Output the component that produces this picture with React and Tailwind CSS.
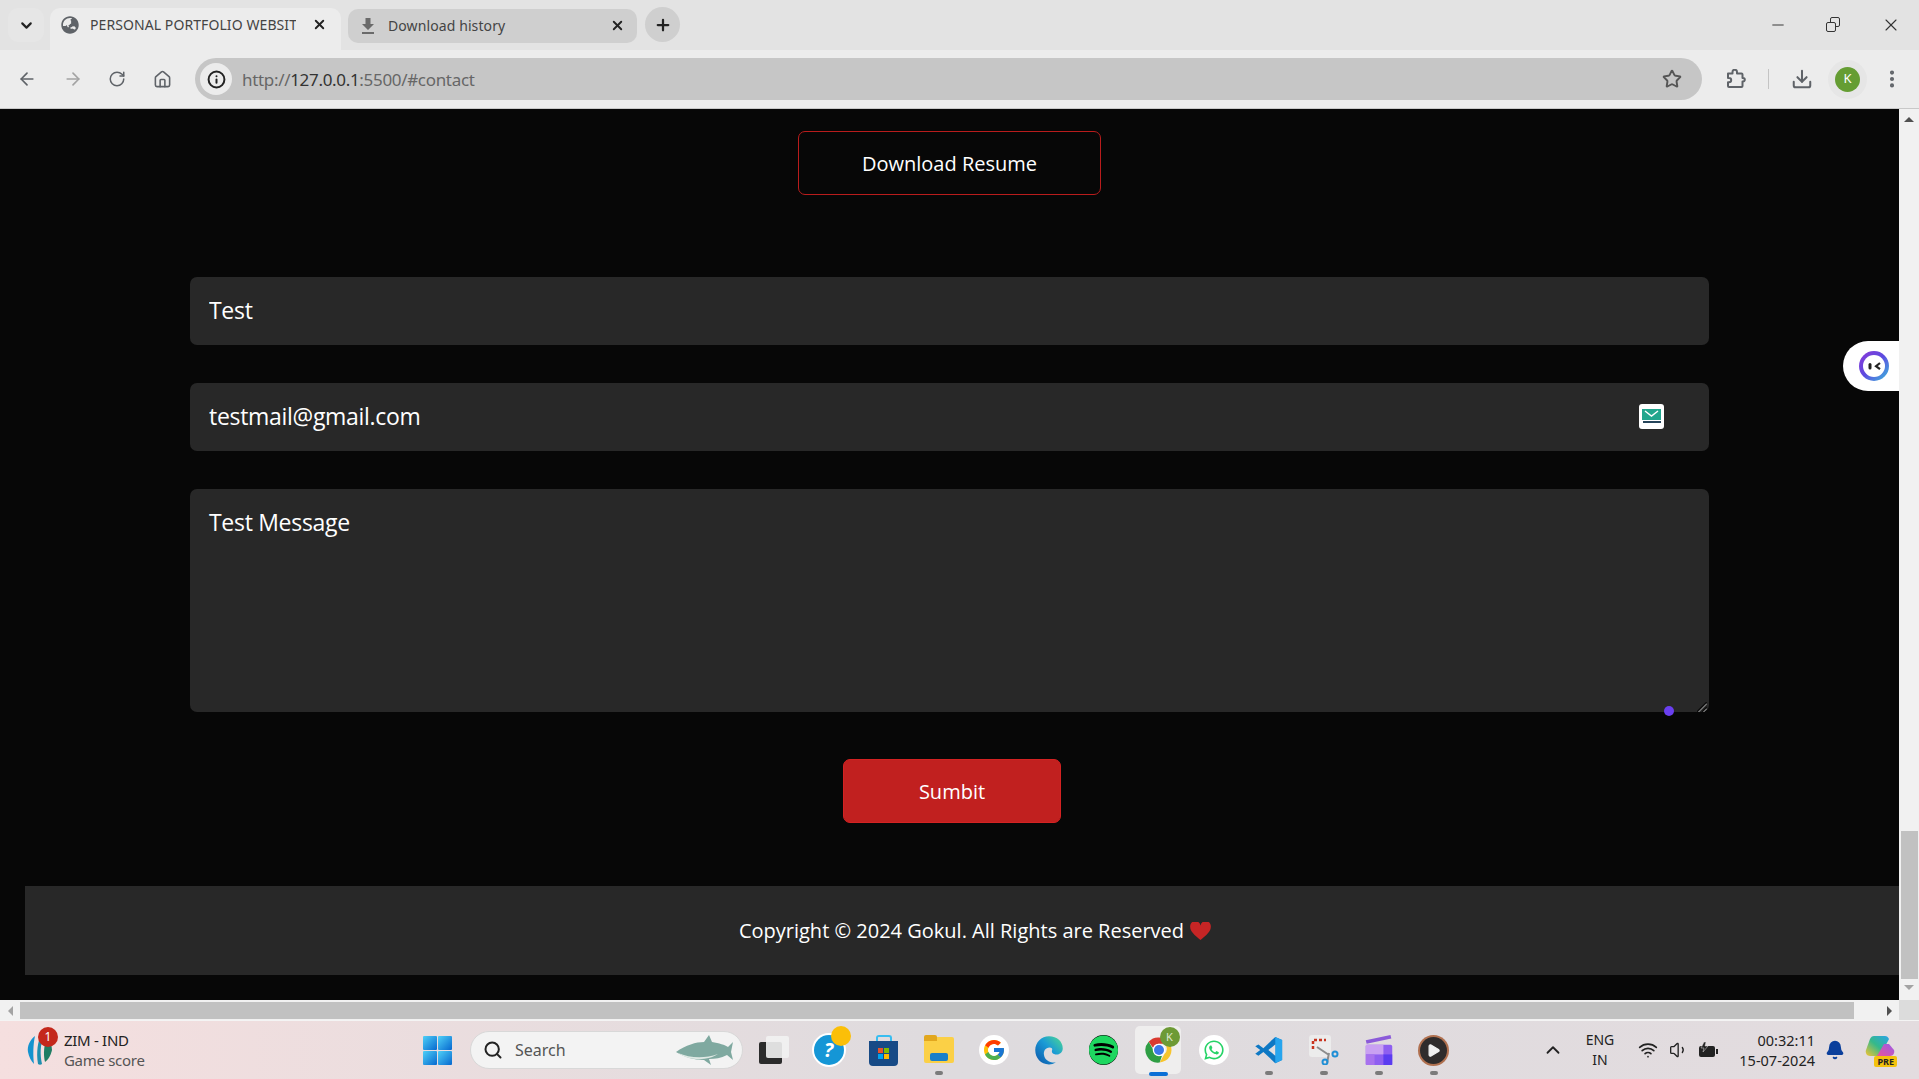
import React from "react";
import {
  ArrowLeft,
  ArrowRight,
  RotateCw,
  Home,
  Info,
  Star,
  Download,
  EllipsisVertical,
  Minus,
  X,
  Plus,
  ChevronDown,
  ChevronUp,
  Search,
  Wifi,
  Volume1,
  Bell,
  Play,
} from "lucide-react";
import { FcGoogle } from "react-icons/fc";
import { FaWhatsapp, FaSpotify, FaGlobeAsia } from "react-icons/fa";

const uiFont = { fontFamily: '"Noto Sans", "Open Sans", sans-serif' };

/* ---- small drawings ---- */

function WindowsLogo() {
  return (
    <svg width="29" height="29" viewBox="0 0 29 29">
      <defs>
        <linearGradient id="win" x1="0" y1="0" x2="1" y2="1">
          <stop offset="0" stopColor="#4fd0f7" />
          <stop offset="1" stopColor="#0668cf" />
        </linearGradient>
      </defs>
      <rect x="0" y="0" width="14" height="14" rx="1" fill="url(#win)" />
      <rect x="15" y="0" width="14" height="14" rx="1" fill="url(#win)" />
      <rect x="0" y="15" width="14" height="14" rx="1" fill="url(#win)" />
      <rect x="15" y="15" width="14" height="14" rx="1" fill="url(#win)" />
    </svg>
  );
}

function CricketLogo() {
  return (
    <svg width="26" height="30" viewBox="0 0 26 30">
      <path d="M8 1C3 5 0 11 1 17c1 5 3 9 6 12-1-8-1-19 1-28z" fill="#1593cf" />
      <path d="M14 0c-3 6-5 17-3 29 1 1 3 1 4 0-2-9-2-20 2-28z" fill="#1d8fb0" />
      <path d="M20 3c-3 7-4 16-2 24 3-2 6-7 7-12 0-4-2-9-5-12z" fill="#1f7d63" />
    </svg>
  );
}

function ChromeLogo() {
  return (
    <svg width="30" height="30" viewBox="0 0 48 48">
      <path d="M24 4a20 20 0 0 1 17.3 10H24a10 10 0 0 0-9.4 6.6L7.5 10.8A20 20 0 0 1 24 4z" fill="#d93a2f" />
      <path d="M41.3 14A20 20 0 0 1 25 44l8-14a10 10 0 0 0-1-16h9.3z" fill="#f7c52d" />
      <path d="M7.5 10.8l8.7 15a10 10 0 0 0 12.6 7.2L25 44A20 20 0 0 1 7.5 10.8z" fill="#2f9e44" />
      <circle cx="24" cy="24" r="10" fill="#fff" />
      <circle cx="24" cy="24" r="8" fill="#3b78e7" />
    </svg>
  );
}

function EdgeLogo() {
  return (
    <svg width="30" height="30" viewBox="0 0 48 48">
      <defs>
        <linearGradient id="edge" x1="0" y1="1" x2="1" y2="0">
          <stop offset="0" stopColor="#0b53a8" />
          <stop offset="0.55" stopColor="#1a9ad6" />
          <stop offset="1" stopColor="#4fdc8f" />
        </linearGradient>
      </defs>
      <path d="M24 2c13 0 22 9 22 19 0 7-6 11-12 10-5-1-6-4-5-7 1-2-1-4-4-4-7 0-10 6-9 12 1 7 8 13 19 12-4 2-7 3-11 3C11 47 2 37 2 24 2 12 12 2 24 2z" fill="url(#edge)" />
    </svg>
  );
}

function VsCodeLogo() {
  return (
    <svg width="30" height="30" viewBox="0 0 48 48">
      <path d="M34 3l11 5v32l-11 5L15 27l-8 6-5-3 8-6-8-6 5-3 8 6L34 3z" fill="#0e78c4" />
      <path d="M34 3l11 5v32l-11 5V3z" fill="#27a5ee" />
      <path d="M34 15v18l-11-9 11-9z" fill="#e3dfe1" />
    </svg>
  );
}

function SnipLogo() {
  return (
    <svg width="30" height="30" viewBox="0 0 30 30">
      <rect x="0" y="0" width="22" height="22" rx="3" fill="#ececec" />
      <path d="M4 14V5h13" fill="none" stroke="#c8341f" strokeWidth="2.5" strokeDasharray="3 2" />
      <path d="M8 12l12 8M18 28l2-10" stroke="#8d8d8d" strokeWidth="2" />
      <circle cx="26" cy="19" r="2.5" fill="none" stroke="#1f8fd6" strokeWidth="2" />
      <circle cx="16" cy="27" r="2.5" fill="none" stroke="#1f8fd6" strokeWidth="2" />
    </svg>
  );
}

function ClapperLogo() {
  return (
    <svg width="30" height="30" viewBox="0 0 30 34">
      <path d="M0 6l28-6 1 4L1 10z" fill="#8b5ad9" />
      <rect x="0" y="11" width="30" height="23" rx="2" fill="#8f5ff0" />
      <rect x="0" y="11" width="20" height="11" fill="#c9a0f2" />
      <rect x="0" y="22" width="10" height="12" fill="#a872ee" />
      <rect x="20" y="22" width="10" height="12" fill="#5b3cf0" />
    </svg>
  );
}

function PlayerLogo() {
  return (
    <div className="flex h-[27px] w-[27px] items-center justify-center rounded-full bg-[#2f2c2c] ring-[2px] ring-[#b0704f]">
      <Play size={15} fill="#f0f0f0" stroke="#f0f0f0" />
    </div>
  );
}

function CopilotLogo() {
  return (
    <div className="relative h-[30px] w-[30px]">
      <svg width="30" height="24" viewBox="0 0 30 24">
        <defs>
          <linearGradient id="copl" x1="0" y1="1" x2="1" y2="0">
            <stop offset="0" stopColor="#f5c431" />
            <stop offset="0.5" stopColor="#35b98a" />
            <stop offset="1" stopColor="#2aa3e8" />
          </linearGradient>
          <linearGradient id="copr" x1="0" y1="1" x2="1" y2="0">
            <stop offset="0" stopColor="#e8559a" />
            <stop offset="1" stopColor="#9a5ae8" />
          </linearGradient>
        </defs>
        <path d="M9 1h11c2 0 3 1 4 3l-9 17H5c-3 0-5-3-4-6L5 4c1-2 2-3 4-3z" fill="url(#copl)" />
        <path d="M19 9h5l5 6c1 3-1 6-4 6H12z" fill="url(#copr)" />
      </svg>
      <span className="absolute bottom-[-2px] right-[-2px] rounded-[2px] bg-[#f4c20d] px-[3px] text-[9px] font-bold leading-[11px] text-[#222]">
        PRE
      </span>
    </div>
  );
}

function TempMailIcon() {
  return (
    <div className="flex h-[25px] w-[25px] flex-col items-center rounded-[3px] bg-white pt-[5px]">
      <svg width="19" height="11" viewBox="0 0 19 11">
        <rect width="19" height="11" fill="#21a68d" />
        <path d="M3 2l6.5 5L16 2" stroke="#fff" strokeWidth="1.4" fill="none" />
      </svg>
      <div className="mt-[1px] h-[2px] w-[18px] bg-[#25445a]" />
    </div>
  );
}

function ExtensionIcon() {
  return (
    <svg width="20" height="20" viewBox="0 0 20 20" className="ml-[24px]">
      <path
        d="M2 4.5h4.5V3a2 2 0 0 1 4.500 0v1.500h4.500a1 1 0 0 1 1 1v3.500h.5a1.800 1.800 0 0 1 0 3.600h-.5v4.400a1 1 0 0 1-1 1H3a1 1 0 0 1-1-1v-3.700h1a2.200 2.200 0 0 0 0-4.400H2z"
        fill="none"
        stroke="currentColor"
        strokeWidth="2"
        strokeLinejoin="round"
      />
    </svg>
  );
}

function TabDownloadIcon() {
  return (
    <svg width="14" height="16" viewBox="0 0 14 16" className="ml-[2px]">
      <path d="M4.5 0h5v6H13L7 12 1 6h3.500z" fill="#6a6a6a" />
      <rect x="1" y="14" width="12" height="2" fill="#6a6a6a" />
    </svg>
  );
}

function AssistantIcon() {
  return (
    <div className="flex h-[30px] w-[30px] items-center justify-center rounded-full bg-gradient-to-br from-[#8a35d8] via-[#5a4ae0] to-[#25b8d8]">
      <svg width="22" height="22" viewBox="0 0 22 22">
        <circle cx="11" cy="11" r="11" fill="#fff" />
        <rect x="5.5" y="8" width="3" height="6.5" rx="1.5" fill="#222" />
        <path d="M17 8l-4 3.200 4 3" fill="none" stroke="#222" strokeWidth="2.2" />
      </svg>
    </div>
  );
}

function ResizeGrip() {
  return (
    <svg width="10" height="10" viewBox="0 0 10 10" className="absolute bottom-0 right-[2px]">
      <path d="M0 10L10 0M5 10l5-5" stroke="#0d0d0d" strokeWidth="1.6" />
      <path d="M1.5 10L10 1.500M6.500 10L10 6.500" stroke="#b5b5b5" strokeWidth="1" />
    </svg>
  );
}

/* ---- browser chrome ---- */

function TabBar() {
  return (
    <div className="flex h-[50px] items-start bg-[#e3e3e3] text-[#3c3c3c]" style={uiFont}>
      <div className="ml-[8px] mt-[8px] flex h-[34px] w-[36px] items-center justify-center rounded-[10px] bg-[#e6e6e6]">
        <ChevronDown size={17} strokeWidth={3} className="text-[#222]" />
      </div>
      {/* active tab */}
      <div className="ml-[6px] mt-[8px] flex h-[42px] w-[291px] items-center rounded-t-[10px] bg-[#ececec] pb-[9px] pl-[11px]">
        <FaGlobeAsia size={18} className="text-[#5f6368]" />
        <span className="ml-[11px] w-[206px] overflow-hidden whitespace-nowrap text-[14px] tracking-[0.08px] text-[#444]">
          PERSONAL PORTFOLIO WEBSIT
        </span>
        <X size={15} strokeWidth={3} className="ml-[16px] text-[#222]" />
      </div>
      {/* other tab */}
      <div className="ml-[7px] mt-[9px] flex h-[34px] w-[289px] items-center rounded-[10px] bg-[#cfcfcf] pb-[1px] pl-[11px]">
        <TabDownloadIcon />
        <span className="ml-[13px] w-[222px] whitespace-nowrap text-[14px] tracking-[0.1px] text-[#444]">
          Download history
        </span>
        <X size={15} strokeWidth={3} className="text-[#222]" />
      </div>
      <div className="ml-[8px] mt-[7px] flex h-[35px] w-[35px] items-center justify-center rounded-full bg-[#cfcfcf]">
        <Plus size={18} strokeWidth={3} className="text-[#222]" />
      </div>
      <div className="ml-auto mt-[15px] flex items-center text-[#333]">
        <Minus size={18} strokeWidth={1.3} />
        <div className="relative ml-[39px] h-[13px] w-[13px]">
          <div className="absolute right-[-1px] top-[-2px] h-[10px] w-[10px] rounded-[2px] border border-[#333]" />
          <div className="absolute bottom-0 left-0 h-[10px] w-[10px] rounded-[2px] border border-[#333] bg-[#e3e3e3]" />
        </div>
        <X size={20} strokeWidth={1.3} className="ml-[42px] mr-[18px]" />
      </div>
    </div>
  );
}

function Toolbar() {
  return (
    <div className="flex h-[59px] items-start border-b border-[#c8c8c8] bg-[#ececec] pt-[8px]" style={uiFont}>
      <div className="flex h-[42px] items-center pl-[17px] text-[#5f6368]">
        <ArrowLeft size={20} strokeWidth={2} />
        <ArrowRight size={20} strokeWidth={2} className="ml-[26px] text-[#a3a3a3]" />
        <RotateCw size={18} strokeWidth={2} className="ml-[25px]" />
        <Home size={19} strokeWidth={2} className="ml-[27px]" />
      </div>
      <div className="ml-[23px] flex h-[42px] w-[1507px] items-center rounded-full bg-[#c6c6c6] pl-[5px] pr-[20px]">
        <div className="flex h-[32px] w-[32px] items-center justify-center rounded-full bg-[#ececec]">
          <Info size={19} strokeWidth={2.5} className="text-[#222]" />
        </div>
        <span className="ml-[10px] whitespace-nowrap pt-[1px] text-[17px] tracking-[-0.32px] text-[#666]">
          http://<span className="text-[#333]">127.0.0.1</span>:5500/#contact
        </span>
        <Star size={20} strokeWidth={2.3} className="ml-auto text-[#555]" />
      </div>
      <div className="flex h-[42px] items-center text-[#5f6368]">
        <ExtensionIcon />
        <div className="ml-[22px] h-[20px] w-[1px] bg-[#c4c4c4]" />
        <Download size={22} strokeWidth={2.2} className="ml-[22px]" />
        <div className="ml-[22px] flex h-[25px] w-[25px] items-center justify-center rounded-full bg-[#659d33] text-[13px] text-white ring-[7px] ring-[#e6e6e6]">
          K
        </div>
        <EllipsisVertical size={22} strokeWidth={2.5} className="ml-[21px]" />
      </div>
    </div>
  );
}

/* ---- the page itself ---- */

function ContactPage() {
  const fieldClass =
    "h-[68px] w-full rounded-[7px] bg-[#282828] px-[19px] pb-[2px] text-[23px] tracking-[-0.3px] text-white outline-none";

  return (
    <div className="relative h-[891px] w-[1899px] overflow-hidden bg-[#070707] text-white" style={{ fontFamily: '"Open Sans", sans-serif' }}>
      <div className="flex justify-center pt-[22px]">
        <button className="h-[64px] w-[303px] rounded-[7px] border border-[#b91c1c] pt-[1px] text-[20px]">
          Download Resume
        </button>
      </div>

      <form className="mt-[82px] flex flex-col gap-[38px] px-[190px]">
        <input className={fieldClass} readOnly value="Test" />
        <div className="relative">
          <input className={fieldClass} readOnly value="testmail@gmail.com" />
          <div className="absolute right-[45px] top-[21px]">
            <TempMailIcon />
          </div>
        </div>
        <div className="relative h-[223px]">
          <textarea
            className="block h-[223px] w-full resize-none rounded-[7px] bg-[#282828] px-[19px] py-[16px] text-[23px] tracking-[-0.3px] text-white outline-none"
            readOnly
            defaultValue="Test Message"
          />
          <ResizeGrip />
          <div className="absolute bottom-[-4px] right-[35px] h-[10px] w-[10px] rounded-full bg-[#6a3ff0]" />
        </div>
      </form>

      <div className="mt-[47px] flex justify-center pl-[5px]">
        <button className="h-[64px] w-[218px] rounded-[7px] border border-[#d42222] bg-[#c1201f] pt-[1px] text-[20px]">
          Sumbit
        </button>
      </div>

      <footer className="ml-[25px] mt-[63px] flex h-[89px] items-center justify-center bg-[#282828] pl-[26px] text-[20px]">
        Copyright © 2024 Gokul. All Rights are Reserved
        <svg width="21" height="18" viewBox="0 0 24 21" className="ml-[6px]">
          <path d="M12 21C5 15 0 11 0 6a6 6 0 0 1 12-2 6 6 0 0 1 12 2c0 5-5 9-12 15z" fill="#c62525" />
        </svg>
      </footer>

      {/* floating assistant button */}
      <div className="absolute right-0 top-[232px] flex h-[50px] w-[56px] items-center rounded-l-full bg-white pl-[16px]">
        <AssistantIcon />
      </div>
    </div>
  );
}

function VerticalScrollbar() {
  return (
    <div className="flex h-[891px] w-[20px] flex-col items-center bg-[#f1f1f1]">
      <div className="mt-[8px] h-0 w-0 border-x-[5px] border-b-[5px] border-x-transparent border-b-[#505050]" />
      <div className="mt-[709px] h-[148px] w-[17px] bg-[#c1c1c1]" />
      <div className="mt-[6px] h-0 w-0 border-x-[5px] border-t-[5px] border-x-transparent border-t-[#a3a3a3]" />
    </div>
  );
}

function HorizontalScrollbar() {
  return (
    <div className="flex h-[20px] bg-[#f1f1f1]">
      <div className="flex h-[20px] w-[20px] items-center justify-center pt-[2px]">
        <div className="h-0 w-0 border-y-[5px] border-r-[5px] border-y-transparent border-r-[#a3a3a3]" />
      </div>
      <div className="mt-[2px] h-[17px] w-[1834px] bg-[#c1c1c1]" />
      <div className="flex h-[20px] w-[45px] items-center justify-end pr-[7px] pt-[2px]">
        <div className="h-0 w-0 border-y-[5px] border-l-[5px] border-y-transparent border-l-[#505050]" />
      </div>
      <div className="h-[20px] w-[20px] bg-[#dcdcdc]" />
    </div>
  );
}

/* ---- windows taskbar ---- */

function AppSlot({ children, dot, active }) {
  return (
    <div className="relative flex h-[58px] w-[55px] items-center justify-center">
      {active && <div className="absolute left-[4px] top-[5px] h-[48px] w-[46px] rounded-[5px] bg-[#efeeee]" />}
      <div className="relative flex items-center justify-center">{children}</div>
      {dot && <div className="absolute bottom-[4px] h-[4px] w-[8px] rounded-full bg-[#7b7b7b]" />}
      {active && <div className="absolute bottom-[3px] h-[4px] w-[19px] rounded-full bg-[#0a6fd6]" />}
    </div>
  );
}

function Taskbar() {
  return (
    <div
      className="flex h-[59px] items-center border-t border-[#f4f4f4] bg-gradient-to-r from-[#f5dfdf] via-[#dedbde] to-[#e3dcdf] text-[#222]"
      style={uiFont}
    >
      {/* news widget */}
      <div className="relative ml-[27px] h-[30px] w-[26px]">
        <CricketLogo />
        <span className="absolute right-[-5px] top-[-8px] flex h-[20px] w-[20px] items-center justify-center rounded-full bg-[#c4281c] text-[12px] text-white">
          1
        </span>
      </div>
      <div className="ml-[11px] w-[78px] pb-[1px] text-[15px] leading-[20px] tracking-[-0.3px]">
        <div className="whitespace-nowrap">ZIM - IND</div>
        <div className="whitespace-nowrap text-[#555]">Game score</div>
      </div>

      <div className="ml-[281px] flex">
        <WindowsLogo />
      </div>

      <div className="ml-[18px] flex h-[38px] w-[273px] items-center rounded-full border border-[#d8d8d8] bg-[#f3f3f3] pl-[12px] pr-[8px]">
        <Search size={20} strokeWidth={2.4} className="text-[#222]" />
        <span className="ml-[12px] text-[16px] text-[#555]">Search</span>
        <svg width="60" height="34" viewBox="0 0 60 34" className="ml-auto">
          <path d="M2 19c10-7 20-10 28-10l5-7 3 7c7 1 13 3 16 5l5-5-2 10 2 8-6-5c-6 3-12 4-18 4l2 6-7-5c-10 0-20-3-28-8z" fill="#7fa9a0" />
          <path d="M4 20c12 5 26 6 40 1-8 6-28 8-40-1z" fill="#dfe9e4" />
        </svg>
      </div>

      <div className="ml-[3px] flex">
        <AppSlot>
          <div className="relative h-[28px] w-[30px]">
            <div className="absolute bottom-0 left-0 h-[22px] w-[23px] rounded-[2px] bg-[#2b2b2b]" />
            <div className="absolute right-0 top-0 h-[22px] w-[23px] rounded-[2px] bg-[#f2f2f2]/90" />
          </div>
        </AppSlot>
        <AppSlot>
          <div className="relative flex h-[30px] w-[30px] items-center justify-center rounded-full bg-[#1596d6] ring-2 ring-white">
            <span className="text-[20px] font-bold italic leading-none text-white">?</span>
            <span className="absolute right-[-7px] top-[-9px] h-[20px] w-[20px] rounded-full bg-[#fbbf08]" />
          </div>
        </AppSlot>
        <AppSlot>
          <div className="relative mt-[6px] flex h-[25px] w-[29px] items-center justify-center rounded-b-[4px] bg-[#174a86]">
            <div className="absolute top-[-6px] h-[6px] w-[16px] rounded-t-[3px] border-2 border-b-0 border-[#38bdf0]" />
            <div className="grid grid-cols-2 gap-[1px]">
              <span className="h-[5px] w-[5px] bg-[#e8532b]" />
              <span className="h-[5px] w-[5px] bg-[#7fba00]" />
              <span className="h-[5px] w-[5px] bg-[#00a4ef]" />
              <span className="h-[5px] w-[5px] bg-[#ffb900]" />
            </div>
          </div>
        </AppSlot>
        <AppSlot dot>
          <div className="relative h-[26px] w-[30px] rounded-[2px] bg-[#fbd046]">
            <div className="absolute left-0 top-[-2px] h-[6px] w-[13px] rounded-t-[2px] bg-[#e2a71e]" />
            <div className="absolute bottom-[2px] left-[6px] h-[8px] w-[18px] rounded-[2px] bg-[#1a7fc8]" />
          </div>
        </AppSlot>
        <AppSlot>
          <div className="flex h-[30px] w-[30px] items-center justify-center rounded-full bg-white">
            <FcGoogle size={24} />
          </div>
        </AppSlot>
        <AppSlot>
          <EdgeLogo />
        </AppSlot>
        <AppSlot>
          <div className="flex h-[30px] w-[29px] items-center justify-center rounded-full bg-black">
            <FaSpotify size={30} className="text-[#1ed760]" />
          </div>
        </AppSlot>
        <AppSlot active>
          <ChromeLogo />
          <span className="absolute right-[-6px] top-[-8px] flex h-[20px] w-[20px] items-center justify-center rounded-full bg-[#6d9a35] text-[11px] text-[#dfe8cf]">
            K
          </span>
        </AppSlot>
        <AppSlot>
          <div className="flex h-[30px] w-[30px] items-center justify-center rounded-full bg-white">
            <FaWhatsapp size={22} className="text-[#25d366]" />
          </div>
        </AppSlot>
        <AppSlot dot>
          <VsCodeLogo />
        </AppSlot>
        <AppSlot dot>
          <SnipLogo />
        </AppSlot>
        <AppSlot dot>
          <ClapperLogo />
        </AppSlot>
        <AppSlot dot>
          <PlayerLogo />
        </AppSlot>
      </div>

      {/* tray */}
      <ChevronUp size={22} strokeWidth={2} className="ml-[81px] text-[#222]" />
      <div className="ml-[11px] w-[50px] text-center text-[14px] leading-[20px]">
        <div>ENG</div>
        <div>IN</div>
      </div>
      <Wifi size={20} strokeWidth={2} className="ml-[13px]" />
      <Volume1 size={20} strokeWidth={1.6} className="ml-[11px]" />
      <svg width="20" height="16" viewBox="0 0 20 16" className="ml-[9px]">
        <rect x="1" y="4" width="16" height="11" rx="2" fill="#222" />
        <rect x="18" y="7" width="2" height="5" fill="#222" />
        <path d="M6 0L3 6h3l-1 4 5-6H7l1-4z" fill="#222" stroke="#e0dcdf" strokeWidth="0.5" />
      </svg>
      <div className="ml-auto text-right text-[14.5px] leading-[20px]">
        <div>00:32:11</div>
        <div className="whitespace-nowrap">15-07-2024</div>
      </div>
      <Bell size={20} fill="#0b3f9c" stroke="#0b3f9c" className="ml-[10px]" />
      <div className="ml-[20px] mr-[24px]">
        <CopilotLogo />
      </div>
    </div>
  );
}

export default function App() {
  return (
    <div className="flex h-[1079px] w-full flex-col overflow-hidden">
      <TabBar />
      <Toolbar />
      <div className="flex">
        <ContactPage />
        <VerticalScrollbar />
      </div>
      <HorizontalScrollbar />
      <Taskbar />
    </div>
  );
}
